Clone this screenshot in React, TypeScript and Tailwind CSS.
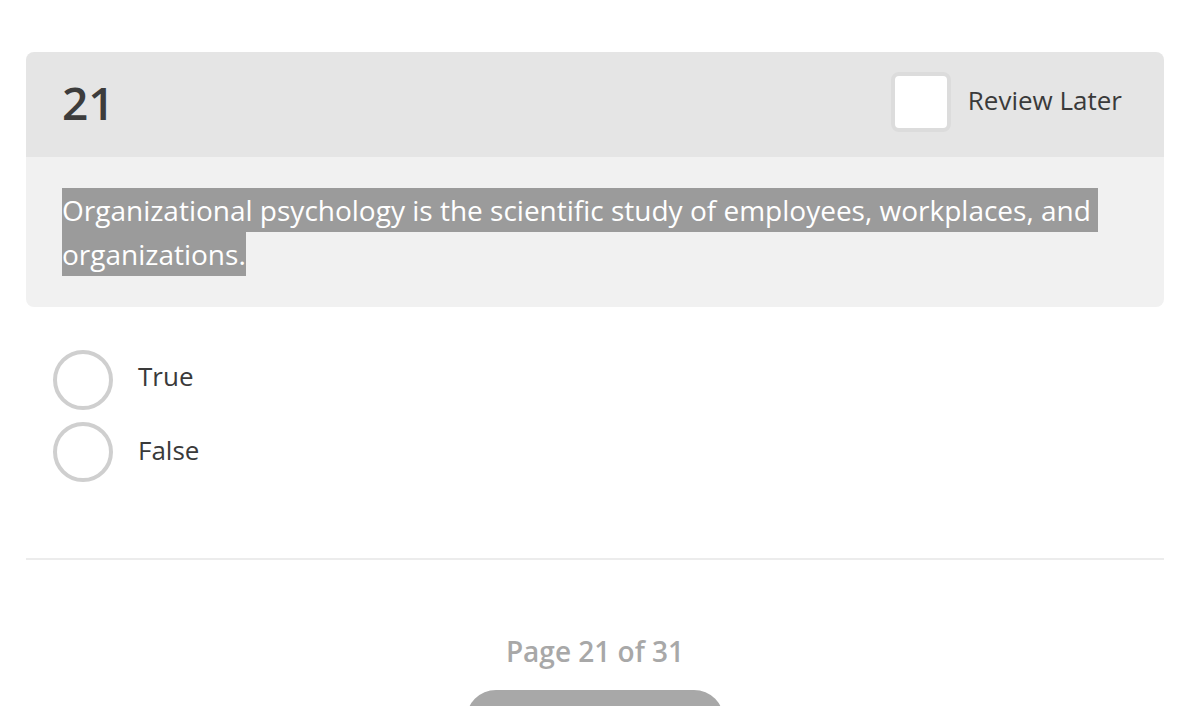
export default function App() {
    const font = { fontFamily: '"Open Sans", "Noto Sans", sans-serif' }

    return (
        <div className="min-h-screen bg-white pt-[52px]" style={font}>
            <div className="ml-[26px] w-[1138px]">
                <div className="overflow-hidden rounded-lg">
                    <div className="flex h-[105px] items-center justify-between bg-[#e5e5e5] pb-[5px] pl-[36px] pr-[42px]">
                        <h2 className="text-[46px] font-semibold leading-none text-[#3c3c3c]">21</h2>
                        <label className="flex items-center gap-[17px]">
                            <span className="h-[60px] w-[60px] rounded-lg border-[4px] border-[#dcdcdc] bg-white"></span>
                            <span className="mb-[4px] text-[26px] text-[#3a3a3a]">Review Later</span>
                        </label>
                    </div>
                    <div className="bg-[#f1f1f1] px-[36px] py-[31px]">
                        <p className="text-[28px] leading-[44px] text-white">
                            <span className="bg-[#9b9b9b] py-[3px]">
                                Organizational psychology is the scientific study of employees, workplaces, and{"\u00a0"}
                            </span>
                            <br />
                            <span className="bg-[#9b9b9b] py-[3px]">organizations.</span>
                        </p>
                    </div>
                </div>

                <div className="mt-[43px] flex flex-col gap-[12px] pl-[27px]">
                    <div className="flex items-center gap-[25px]">
                        <span className="h-[60px] w-[60px] rounded-full border-[4px] border-[#cfcfcf] bg-white"></span>
                        <span className="mb-[7px] text-[26px] text-[#3a3a3a]">True</span>
                    </div>
                    <div className="flex items-center gap-[25px]">
                        <span className="h-[60px] w-[60px] rounded-full border-[4px] border-[#cfcfcf] bg-white"></span>
                        <span className="mb-[4px] text-[26px] text-[#3a3a3a]">False</span>
                    </div>
                </div>

                <div className="mt-[76px] h-[2px] bg-[#ececec]"></div>

                <div className="mt-[77px] flex flex-col items-center">
                    <p className="text-[28px] font-semibold leading-none text-[#a8a8a8]">Page 21 of 31</p>
                    <button className="mt-[25px] h-[60px] w-[258px] rounded-full bg-[#a8a8a8]"></button>
                </div>
            </div>
        </div>
    )
}
